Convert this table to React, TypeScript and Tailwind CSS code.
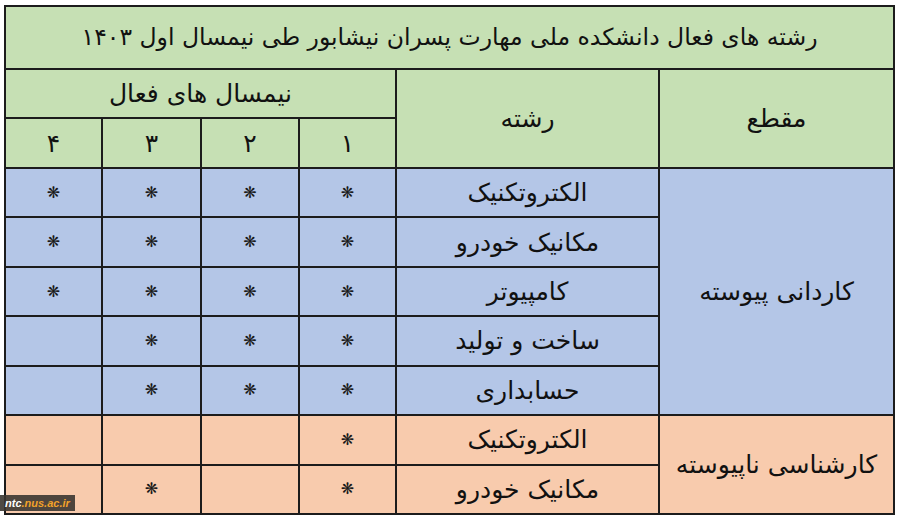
const cell = 'flex items-center justify-center text-[#111] text-[25px] leading-none';
const green = 'bg-[#c6e0b4]';
const blue = 'bg-[#b4c6e7]';
const peach = 'bg-[#f8cbad]';

function Star() {
  return <span className="text-[16px] leading-none text-[#1a1a1a]">❋</span>;
}

const blueRows: { name: string; sems: boolean[] }[] = [
  { name: 'الکتروتکنیک', sems: [true, true, true, true] },
  { name: 'مکانیک خودرو', sems: [true, true, true, true] },
  { name: 'کامپیوتر', sems: [true, true, true, true] },
  { name: 'ساخت و تولید', sems: [true, true, true, false] },
  { name: 'حسابداری', sems: [true, true, true, false] },
];

const peachRows: { name: string; sems: boolean[] }[] = [
  { name: 'الکتروتکنیک', sems: [true, false, false, false] },
  { name: 'مکانیک خودرو', sems: [true, false, true, false] },
];

export default function App() {
  return (
    <div className="relative w-[900px] h-[521px] bg-white pt-[5px] pl-[4px]" style={{ fontFamily: '"DejaVu Sans", sans-serif' }}>
      <div
        dir="rtl"
        className="grid w-[891px] h-[510px] gap-[2px] p-[2px] bg-[#1c1c1c] grid-cols-[233px_261px_95px_96px_97px_1fr] grid-rows-[61px_47px_48px_repeat(7,1fr)]"
      >
        <div className={`${cell} ${green} col-span-6 !text-[23.5px]`}>
          رشته های فعال دانشکده ملی مهارت پسران نیشابور طی نیمسال اول ۱۴۰۳
        </div>

        <div className={`${cell} ${green} row-span-2`}>مقطع</div>
        <div className={`${cell} ${green} row-span-2`}>رشته</div>
        <div className={`${cell} ${green} col-span-4`}>نیمسال های فعال</div>
        {['۱', '۲', '۳', '۴'].map((n) => (
          <div key={n} className={`${cell} ${green}`}>{n}</div>
        ))}

        <div className={`${cell} ${blue} row-span-5`}>کاردانی پیوسته</div>
        {blueRows.map((r) => (
          <>
            <div key={r.name} className={`${cell} ${blue}`}>{r.name}</div>
            {r.sems.map((on, i) => (
              <div key={r.name + i} className={`${cell} ${blue}`}>{on && <Star />}</div>
            ))}
          </>
        ))}

        <div className={`${cell} ${peach} row-span-2`}>کارشناسی ناپیوسته</div>
        {peachRows.map((r) => (
          <>
            <div key={r.name} className={`${cell} ${peach}`}>{r.name}</div>
            {r.sems.map((on, i) => (
              <div key={r.name + i} className={`${cell} ${peach}`}>{on && <Star />}</div>
            ))}
          </>
        ))}
      </div>

      {/* watermark */}
      <div className="absolute left-0 top-[495px] h-[16px] w-[75px] bg-[#3b3631]/90 flex items-center pl-[5px] text-[11px] font-bold italic leading-none" style={{ fontFamily: '"Liberation Sans", sans-serif' }}>
        <span className="text-white">ntc</span>
        <span className="text-[#f2a22a]">.nus.ac.ir</span>
      </div>
    </div>
  );
}
